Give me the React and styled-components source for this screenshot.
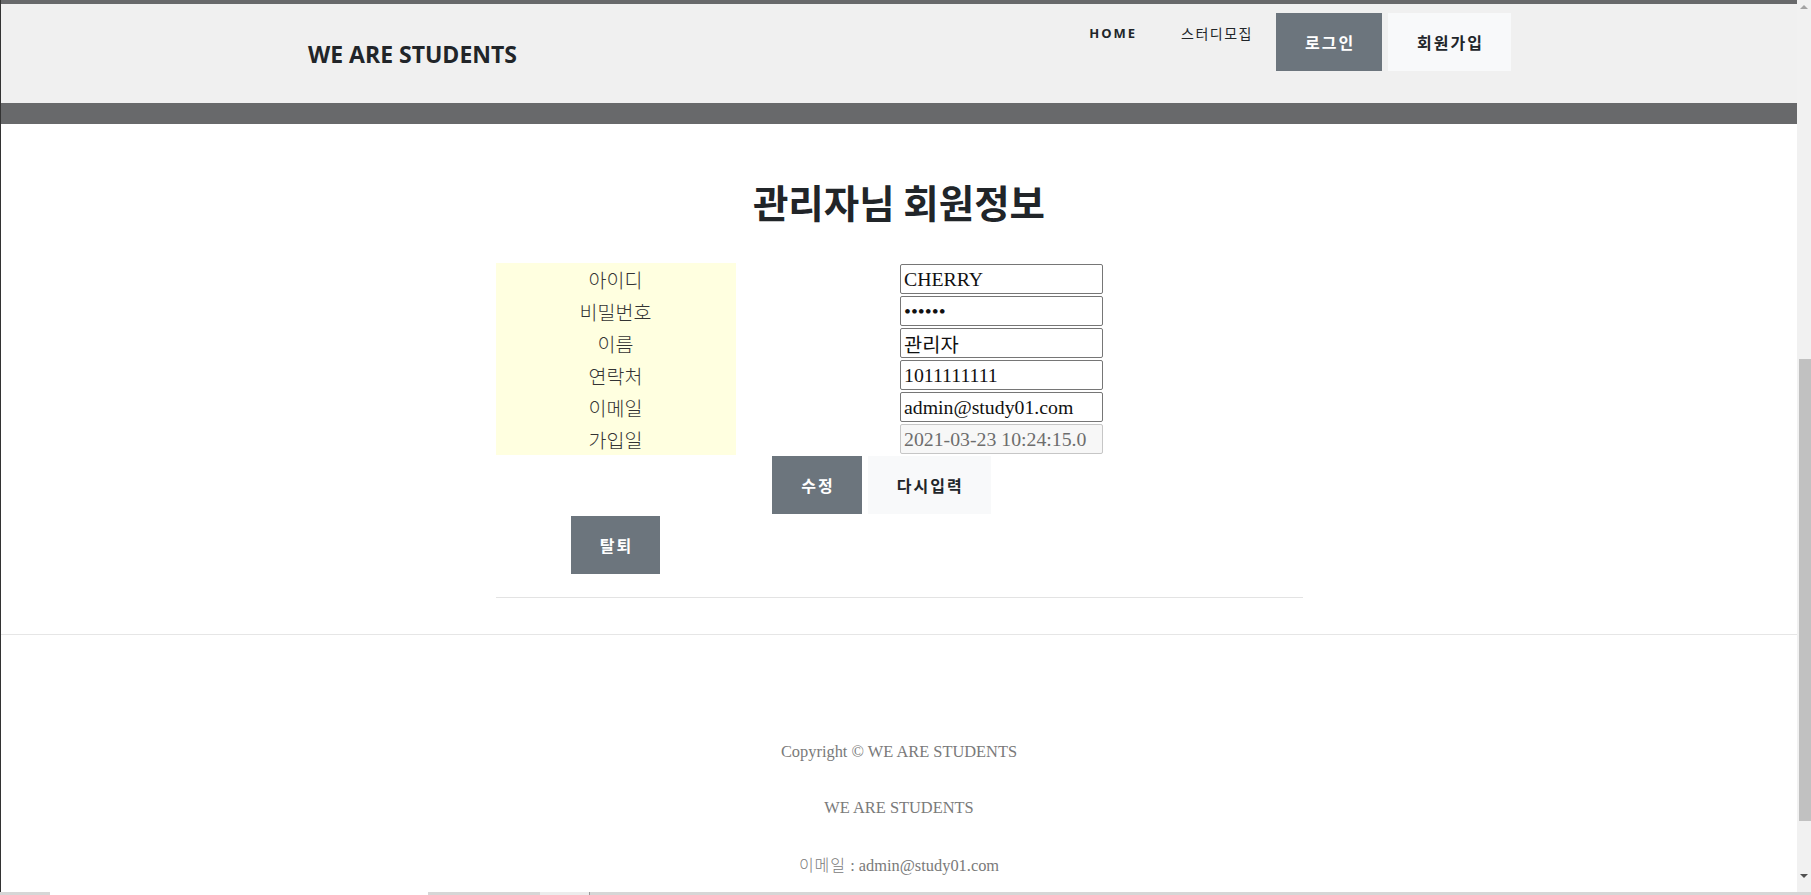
import styled, { createGlobalStyle } from "styled-components";

const GlobalStyle = createGlobalStyle`
  html, body {
    margin: 0;
    padding: 0;
    overflow: hidden;
    background: #fff;
  }
  * { box-sizing: border-box; }
`;

const kr = `"Noto Sans CJK KR", "Noto Sans", sans-serif`;
const serif = `"Liberation Serif", "Noto Sans CJK KR", serif`;

const fields = [
  { label: "아이디", value: "CHERRY" },
  { label: "비밀번호", value: "123456", type: "password" },
  { label: "이름", value: "관리자" },
  { label: "연락처", value: "1011111111" },
  { label: "이메일", value: "admin@study01.com" },
  { label: "가입일", value: "2021-03-23 10:24:15.0", disabled: true },
];

const App = () => (
  <Frame>
    <GlobalStyle />
    <Viewport>
      <Page>
        <TopStripe />
        <Header>
          <HeaderInner>
            <Logo>WE ARE STUDENTS</Logo>
            <Nav>
              <NavLink $bold>HOME</NavLink>
              <NavLink>스터디모집</NavLink>
              <Button $variant="dark">로그인</Button>
              <Button $variant="light">회원가입</Button>
            </Nav>
          </HeaderInner>
        </Header>
        <Band />

        <Section>
          <Container>
            <Title>관리자님 회원정보</Title>
            <InfoGrid>
              {fields.map((f) => (
                <Row key={f.label}>
                  <LabelCell>{f.label}</LabelCell>
                  <InputCell>
                    <Field
                      type={f.type || "text"}
                      defaultValue={f.value}
                      disabled={f.disabled}
                    />
                  </InputCell>
                </Row>
              ))}
              <ButtonRow>
                <Button $variant="dark">수정</Button>
                <Button $variant="light">다시입력</Button>
              </ButtonRow>
              <LeaveCell>
                <Button $variant="dark">탈퇴</Button>
              </LeaveCell>
            </InfoGrid>
            <Rule />
          </Container>
        </Section>

        <Footer>
          <FooterText>Copyright © WE ARE STUDENTS</FooterText>
          <FooterText>WE ARE STUDENTS</FooterText>
          <FooterText>
            <KrSpan>이메일</KrSpan> : admin@study01.com
          </FooterText>
        </Footer>
      </Page>

      <Scrollbar>
        <Arrow $up />
        <Thumb $top={350} $height={462} />
        <Arrow />
      </Scrollbar>
    </Viewport>
    <BottomStrip>
      <StripPart $w={50} $c="#d6d6d6" />
      <StripPart $w={378} $c="#ffffff" />
      <StripPart $w={112} $c="#d6d6d6" />
      <StripPart $w={49} $c="#ececec" />
      <StripPart $w={1} $c="#9a9a9a" />
      <StripPart $grow $c="#d6d6d6" />
    </BottomStrip>
  </Frame>
);

export default App;

const Frame = styled.div`
  width: 1811px;
  height: 895px;
  display: flex;
  flex-direction: column;
  overflow: hidden;
`;

const Viewport = styled.div`
  display: flex;
  height: 892px;
  flex-shrink: 0;
`;

const Page = styled.div`
  width: 1797px;
  border-left: 1px solid #333;
  overflow: hidden;
`;

const TopStripe = styled.div`
  height: 4px;
  background: #68696b;
`;

const Header = styled.header`
  height: 99px;
  background: #f0f0f0;
`;

const HeaderInner = styled.div`
  margin-left: 307px;
  width: 1203px;
  height: 100%;
  display: flex;
  justify-content: space-between;
  padding-top: 9px;
`;

const Logo = styled.div`
  align-self: center;
  margin-top: -9px;
  font-family: "Open Sans", sans-serif;
  font-weight: 700;
  font-size: 23px;
  color: #212529;
`;

const Nav = styled.nav`
  display: flex;
  align-items: flex-start;
`;

const NavLink = styled.a`
  padding: 11px 22px 0;
  line-height: 18px;
  font-family: ${(p) => (p.$bold ? `"Open Sans", sans-serif` : kr)};
  font-weight: ${(p) => (p.$bold ? 700 : 400)};
  font-size: ${(p) => (p.$bold ? "13px" : "14px")};
  letter-spacing: ${(p) => (p.$bold ? "2px" : "1.5px")};
  color: #212529;
  cursor: pointer;

  & + button {
    margin-left: 1px;
  }
`;

const Button = styled.button`
  height: 58px;
  padding: 0 27px 0 29px;
  border: none;
  border-radius: 0;
  font-family: ${kr};
  font-weight: 700;
  font-size: 16px;
  letter-spacing: 2px;
  cursor: pointer;
  background: ${(p) => (p.$variant === "dark" ? "#6c757d" : "#f8f9fa")};
  color: ${(p) => (p.$variant === "dark" ? "#fff" : "#212529")};

  & + & {
    margin-left: 6px;
  }
`;

const Band = styled.div`
  height: 21px;
  background: #68696b;
`;

const Section = styled.section`
  padding-top: 56px;
  padding-bottom: 36px;
  border-bottom: 1px solid #e6e6e6;
`;

const Container = styled.div`
  width: 807px;
  margin: 0 auto;
`;

const Title = styled.h2`
  margin: 0 0 41px;
  text-align: center;
  font-family: ${kr};
  font-weight: 700;
  font-size: 38.5px;
  line-height: 42px;
  color: #212529;
`;

const InfoGrid = styled.div`
  width: 772px;
  display: grid;
  grid-template-columns: 240px 532px;
`;

const Row = styled.div`
  display: contents;
`;

const LabelCell = styled.div`
  height: 32px;
  background: #ffffe0;
  display: flex;
  align-items: center;
  justify-content: center;
  font-family: ${kr};
  font-weight: 300;
  font-size: 19.5px;
  color: #333;
`;

const InputCell = styled.div`
  height: 32px;
  display: flex;
  align-items: center;
  justify-content: center;
`;

const Field = styled.input`
  width: 203px;
  height: 30px;
  margin: 0;
  padding: 0 3px;
  border: 1px solid #767676;
  border-radius: 2px;
  font-family: ${serif};
  font-size: 19.8px;
  color: #111;
  background: #fff;

  &:disabled {
    background: #f7f7f7;
    border-color: #c6c6c6;
    color: #6d6d6d;
  }
`;

const ButtonRow = styled.div`
  grid-column: 1 / span 2;
  margin-top: 1px;
  display: flex;
  justify-content: center;

  & > button + button {
    margin-left: 4px;
  }
`;

const LeaveCell = styled.div`
  grid-column: 1;
  margin-top: 2px;
  display: flex;
  justify-content: center;
`;

const Rule = styled.hr`
  margin: 23px 0 0;
  border: none;
  border-top: 1px solid #e3e3e3;
`;

const Footer = styled.footer`
  padding-top: 105px;
  text-align: center;
`;

const FooterText = styled.p`
  margin: 0 0 32px;
  line-height: 24px;
  font-family: ${serif};
  font-size: 16.4px;
  color: #7a7a7a;
`;

const KrSpan = styled.span`
  font-family: ${kr};
  font-weight: 300;
  font-size: 16px;
  letter-spacing: 1px;
`;

const Scrollbar = styled.div`
  width: 14px;
  background: #f1f1f1;
  display: flex;
  flex-direction: column;
  align-items: flex-end;
`;

const Thumb = styled.div`
  width: 12px;
  height: ${(p) => p.$height}px;
  margin-top: ${(p) => p.$top}px;
  background: #c1c1c1;
`;

const Arrow = styled.div`
  width: 0;
  height: 0;
  margin: ${(p) => (p.$up ? "5px 3px 0 0" : "auto 3px 14px 0")};
  border-left: 4px solid transparent;
  border-right: 4px solid transparent;
  ${(p) =>
    p.$up
      ? "border-bottom: 4px solid #a3a3a3;"
      : "border-top: 4px solid #505050;"}
`;

const BottomStrip = styled.div`
  height: 3px;
  display: flex;
`;

const StripPart = styled.div`
  height: 100%;
  width: ${(p) => (p.$grow ? "auto" : `${p.$w}px`)};
  flex: ${(p) => (p.$grow ? "1" : "none")};
  background: ${(p) => p.$c};
`;
